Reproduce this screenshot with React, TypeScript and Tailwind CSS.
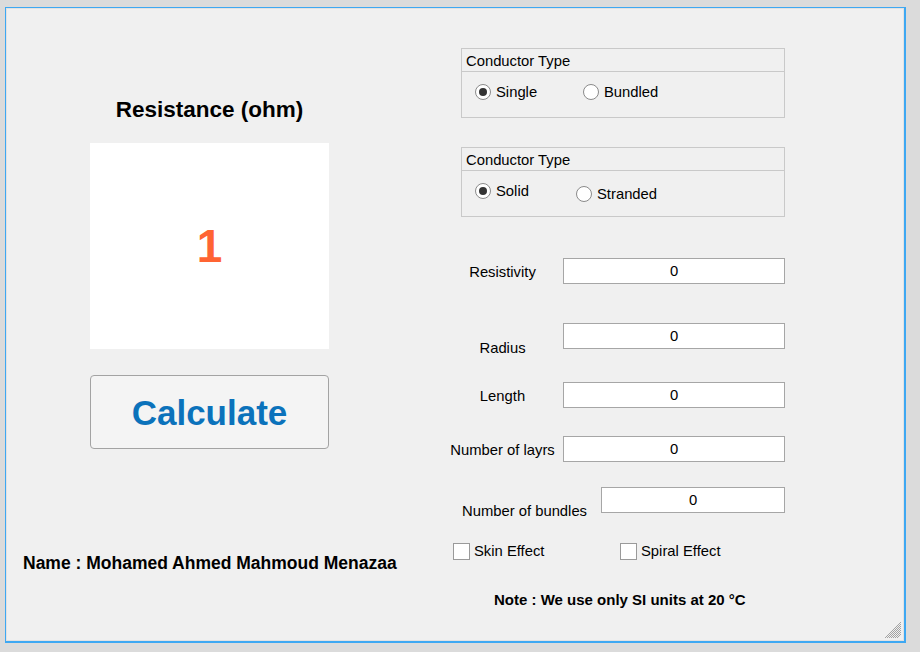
import React from "react";

function Radio({ checked, label }: { checked?: boolean; label: string }) {
  return (
    <div className="flex items-center h-[16px]">
      <div className="w-[16px] h-[16px] rounded-full border border-[#8a8a8a] bg-white flex items-center justify-center shrink-0">
        {checked && <div className="w-[8px] h-[8px] rounded-full bg-[#333333]" />}
      </div>
      <span className="ml-[5px] leading-[16px]">{label}</span>
    </div>
  );
}

function Check({ label }: { label: string }) {
  return (
    <div className="flex items-center h-[17px]">
      <div className="w-[17px] h-[17px] border border-[#9a9a9a] bg-white shrink-0" />
      <span className="ml-[4px] leading-[17px]">{label}</span>
    </div>
  );
}

export default function App() {
  return (
    <div className="w-[920px] h-[652px] bg-[#dbdbdb] pl-[5px] pt-[7px] font-['Liberation_Sans',Arial,sans-serif] text-black text-[14.8px]">
      <div className="relative w-[901px] h-[636px] border-l border-t border-r-2 border-b-2 border-[#3ea8f2]">
        <div className="h-full border border-[#e2e2e2] bg-[#f0f0f0] flex">
          {/* Left column */}
          <div className="w-[442px] flex flex-col">
            <div className="ml-[83px] w-[239px] mt-[89px]">
              <div className="text-center font-bold text-[22.5px] leading-[24px] whitespace-nowrap">Resistance (ohm)</div>
              <div className="mt-[21px] h-[206px] bg-white flex items-center justify-center text-[#ff6433] font-bold text-[46px] leading-none">
                1
              </div>
              <button className="block mt-[26px] h-[74px] w-full rounded-[4px] border border-[#a3a3a3] bg-[#f4f4f4] text-[#0b72bb] font-bold text-[35px] leading-none">
                Calculate
              </button>
            </div>
            <div className="ml-[16px] mt-[104px] text-[17.5px] leading-[20px] font-bold whitespace-nowrap">
              Name : Mohamed Ahmed Mahmoud Menazaa
            </div>
          </div>

          {/* Right column */}
          <div className="flex flex-col w-[345px]">
            <div className="mt-[39px] ml-[12px] w-[324px] h-[70px] border border-[#c9c9c9]">
              <div className="h-[23px] border-b border-[#c9c9c9] pl-[4px] pt-[2px] leading-[20px]">Conductor Type</div>
              <div className="pt-[12px] pl-[13px] flex items-start">
                <div className="w-[108px]">
                  <Radio checked label="Single" />
                </div>
                <Radio label="Bundled" />
              </div>
            </div>

            <div className="mt-[29px] ml-[12px] w-[324px] h-[70px] border border-[#c9c9c9]">
              <div className="h-[23px] border-b border-[#c9c9c9] pl-[4px] pt-[2px] leading-[20px]">Conductor Type</div>
              <div className="pt-[12px] pl-[13px] flex items-start">
                <div className="w-[101px]">
                  <Radio checked label="Solid" />
                </div>
                <div className="mt-[3px]">
                  <Radio label="Stranded" />
                </div>
              </div>
            </div>

            <div className="mt-[41px] flex items-start">
              <div className="w-[107px] mt-[5.5px] text-center leading-[17px]">Resistivity</div>
              <div className="ml-[7px] w-[222px] h-[26px] border border-[#a6a6a6] bg-white text-center pt-[1px] leading-[23px]">0</div>
            </div>

            <div className="mt-[39px] flex items-start">
              <div className="w-[107px] mt-[16.5px] text-center leading-[17px]">Radius</div>
              <div className="ml-[7px] w-[222px] h-[26px] border border-[#a6a6a6] bg-white text-center pt-[1px] leading-[23px]">0</div>
            </div>

            <div className="mt-[25.5px] flex items-start">
              <div className="w-[107px] mt-[5.5px] text-center leading-[17px]">Length</div>
              <div className="ml-[7px] w-[222px] h-[26px] border border-[#a6a6a6] bg-white text-center pt-[1px] leading-[23px]">0</div>
            </div>

            <div className="mt-[28px] flex items-start">
              <div className="w-[107px] mt-[5.5px] text-center leading-[17px] whitespace-nowrap">Number of layrs</div>
              <div className="ml-[7px] w-[222px] h-[26px] border border-[#a6a6a6] bg-white text-center pt-[1px] leading-[23px]">0</div>
            </div>

            <div className="mt-[25px] flex items-start">
              <div className="w-[151px] mt-[16px] text-center leading-[17px] whitespace-nowrap">Number of bundles</div>
              <div className="ml-[1px] w-[184px] h-[26px] border border-[#a6a6a6] bg-white text-center pt-[1px] leading-[23px]">0</div>
            </div>

            <div className="mt-[22.5px] flex items-center">
              <div className="ml-[4px] w-[167px]">
                <Check label="Skin Effect" />
              </div>
              <Check label="Spiral Effect" />
            </div>

            <div className="mt-[31px] ml-[45px] font-bold text-[15px] leading-[17px] whitespace-nowrap">
              Note : We use only SI units at 20 °C
            </div>
          </div>
        </div>

        <svg
          className="absolute right-[3px] bottom-[3px]"
          width="17"
          height="17"
          viewBox="0 0 17 17"
        >
          {[4, 6, 8, 10, 12, 14, 16].map((k) => (
            <line key={k} x1={17 - k} y1={17} x2={17} y2={17 - k} stroke="#a3a3a3" strokeWidth="1" />
          ))}
        </svg>
      </div>
    </div>
  );
}
